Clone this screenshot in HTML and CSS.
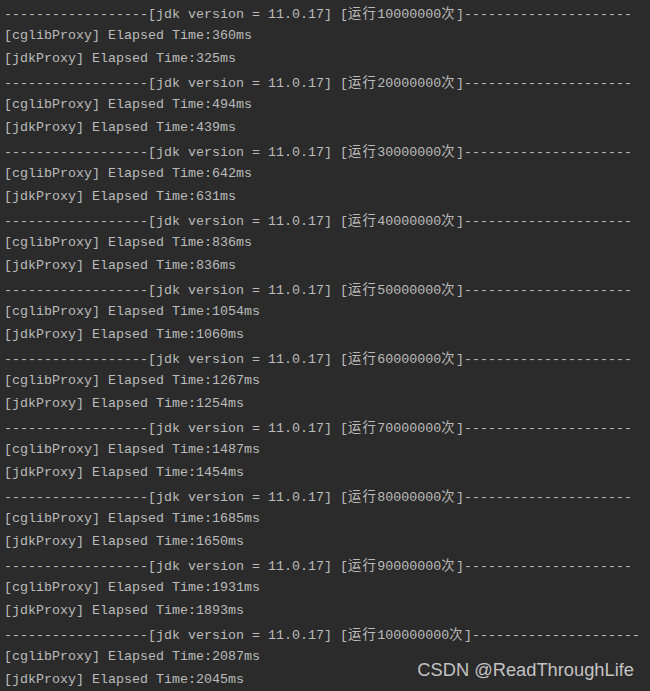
FILE: index.html
```html
<!DOCTYPE html>
<html lang="zh">
<head>
<meta charset="utf-8">
<link rel="stylesheet" href="styles.css">
</head>
<body>
<div class="console">
<div class="line">------------------[jdk version = 11.0.17] [<span class="cjk">运行</span>10000000<span class="cjk">次</span>]---------------------</div>
<div class="line">[cglibProxy] Elapsed Time:360ms</div>
<div class="line">[jdkProxy] Elapsed Time:325ms</div>
<div class="line">------------------[jdk version = 11.0.17] [<span class="cjk">运行</span>20000000<span class="cjk">次</span>]---------------------</div>
<div class="line">[cglibProxy] Elapsed Time:494ms</div>
<div class="line">[jdkProxy] Elapsed Time:439ms</div>
<div class="line">------------------[jdk version = 11.0.17] [<span class="cjk">运行</span>30000000<span class="cjk">次</span>]---------------------</div>
<div class="line">[cglibProxy] Elapsed Time:642ms</div>
<div class="line">[jdkProxy] Elapsed Time:631ms</div>
<div class="line">------------------[jdk version = 11.0.17] [<span class="cjk">运行</span>40000000<span class="cjk">次</span>]---------------------</div>
<div class="line">[cglibProxy] Elapsed Time:836ms</div>
<div class="line">[jdkProxy] Elapsed Time:836ms</div>
<div class="line">------------------[jdk version = 11.0.17] [<span class="cjk">运行</span>50000000<span class="cjk">次</span>]---------------------</div>
<div class="line">[cglibProxy] Elapsed Time:1054ms</div>
<div class="line">[jdkProxy] Elapsed Time:1060ms</div>
<div class="line">------------------[jdk version = 11.0.17] [<span class="cjk">运行</span>60000000<span class="cjk">次</span>]---------------------</div>
<div class="line">[cglibProxy] Elapsed Time:1267ms</div>
<div class="line">[jdkProxy] Elapsed Time:1254ms</div>
<div class="line">------------------[jdk version = 11.0.17] [<span class="cjk">运行</span>70000000<span class="cjk">次</span>]---------------------</div>
<div class="line">[cglibProxy] Elapsed Time:1487ms</div>
<div class="line">[jdkProxy] Elapsed Time:1454ms</div>
<div class="line">------------------[jdk version = 11.0.17] [<span class="cjk">运行</span>80000000<span class="cjk">次</span>]---------------------</div>
<div class="line">[cglibProxy] Elapsed Time:1685ms</div>
<div class="line">[jdkProxy] Elapsed Time:1650ms</div>
<div class="line">------------------[jdk version = 11.0.17] [<span class="cjk">运行</span>90000000<span class="cjk">次</span>]---------------------</div>
<div class="line">[cglibProxy] Elapsed Time:1931ms</div>
<div class="line">[jdkProxy] Elapsed Time:1893ms</div>
<div class="line">------------------[jdk version = 11.0.17] [<span class="cjk">运行</span>100000000<span class="cjk">次</span>]---------------------</div>
<div class="line">[cglibProxy] Elapsed Time:2087ms</div>
<div class="line">[jdkProxy] Elapsed Time:2045ms</div>
</div>
<div class="watermark">CSDN @ReadThroughLife</div>
</body>
</html>
```
FILE: styles.css
```css
html, body {
  margin: 0;
  padding: 0;
  background: #2b2b2b;
  width: 650px;
  height: 691px;
  overflow: hidden;
}
body {
  position: relative;
}
.console {
  padding: 1px 0 0 4px;
  font-family: "Liberation Mono", "DejaVu Sans Mono", monospace;
  font-size: 13.33px;
  line-height: 23px;
  color: #bbbbbb;
}
.line {
  white-space: pre;
  height: 23px;
}
.cjk {
  font-family: "Noto Sans CJK SC", sans-serif;
  font-size: 13.33px;
  letter-spacing: 1.33px;
}
.watermark {
  position: absolute;
  right: 16px;
  bottom: 10px;
  font-family: "Liberation Sans", Arial, sans-serif;
  font-size: 18.3px;
  color: rgba(255, 255, 255, 0.72);
}
```
